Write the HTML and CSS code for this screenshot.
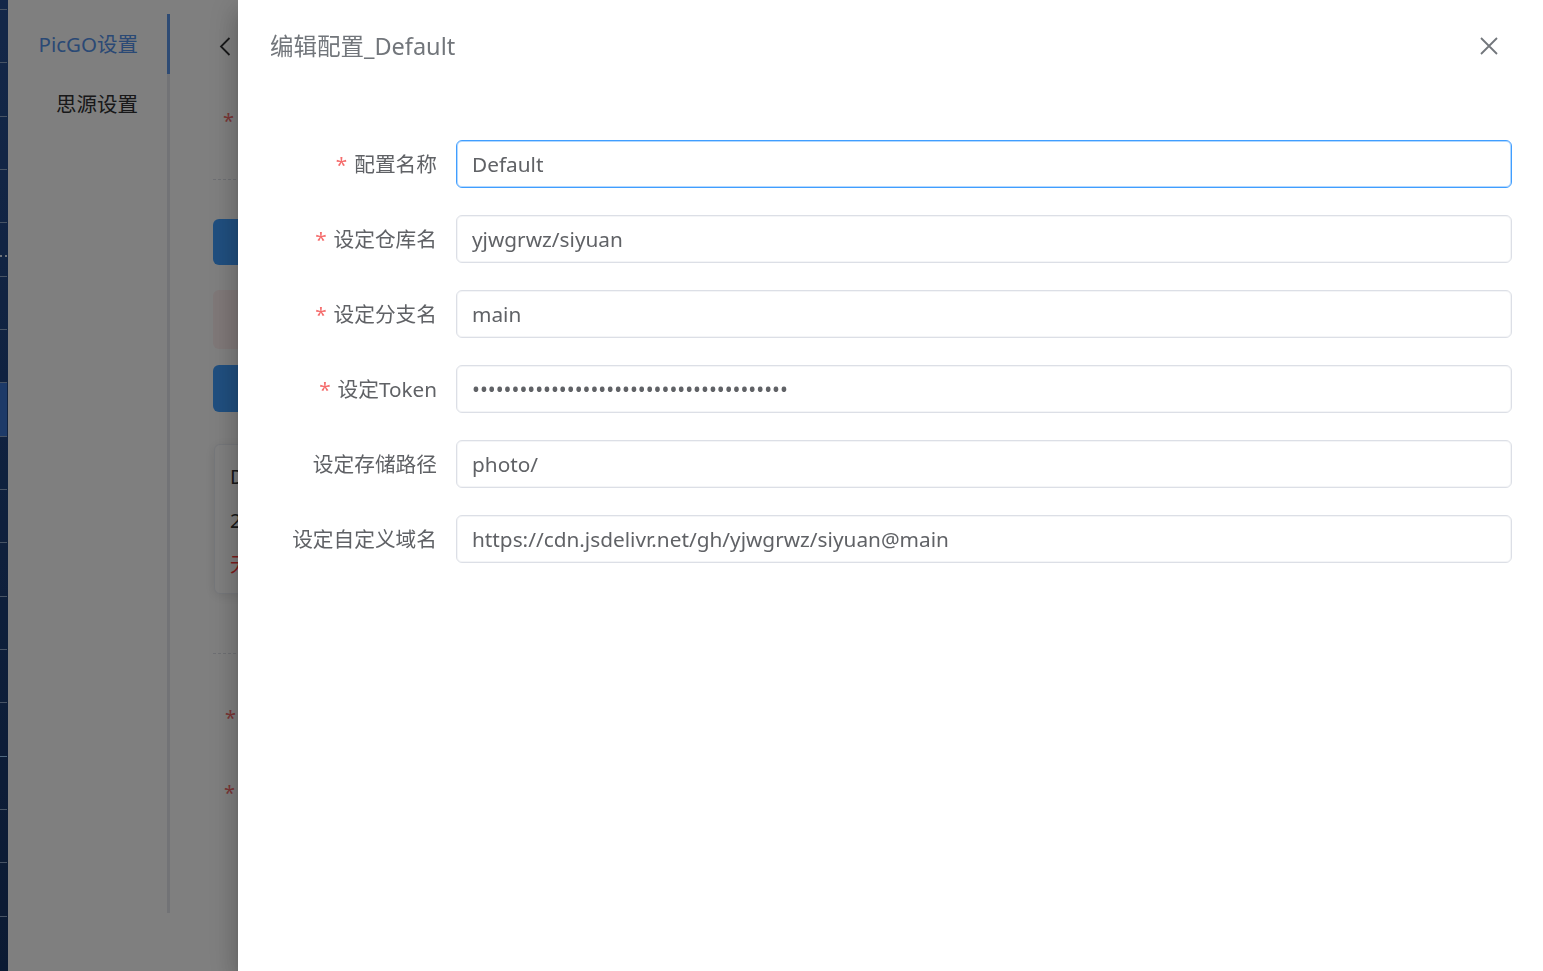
FILE: index.html
```html
<!DOCTYPE html>
<html lang="zh-CN">
<head>
<meta charset="utf-8">
<title>编辑配置</title>
<link rel="stylesheet" href="styles.css">
</head>
<body>
<div class="app">
  <aside class="rail">
    <div class="seg"></div><div class="seg"></div><div class="seg"></div><div class="seg"></div>
    <div class="seg dots"><span></span><span></span></div><div class="seg"></div><div class="seg"></div><div class="seg hl"></div>
    <div class="seg"></div><div class="seg"></div><div class="seg"></div><div class="seg"></div>
    <div class="seg"></div><div class="seg"></div><div class="seg bright"></div><div class="seg"></div>
    <div class="seg"></div><div class="seg"></div>
  </aside>
  <nav class="tabs">
    <div class="tab active">PicGO设置</div>
    <div class="tab">思源设置</div>
    <div class="tabs-fill"></div>
  </nav>
  <main class="page">
    <div class="back">
      <svg width="12" height="19" viewBox="0 0 12 19"><path d="M10.5 1 L2 9.5 L10.5 18" fill="none" stroke="#303133" stroke-width="1.8"/></svg>
    </div>
    <div class="req">*</div>
    <div class="dash first"></div>
    <div class="btn b1"></div>
    <div class="alert"></div>
    <div class="btn b2"></div>
    <div class="card">
      <div class="card-line">Def</div>
      <div class="card-line">20</div>
      <div class="card-line red">无效</div>
    </div>
    <div class="dash second"></div>
    <div class="req r2">*</div>
    <div class="req r3">*</div>
  </main>
</div>
<div class="mask"></div>
<section class="drawer">
  <header class="drawer-header">
    <span class="drawer-title">编辑配置_Default</span>
    <svg class="close" width="18" height="18" viewBox="0 0 18 18"><path d="M1 1 L17 17 M17 1 L1 17" stroke="#72767b" stroke-width="1.8" fill="none"/></svg>
  </header>
  <form class="form">
    <div class="row">
      <label class="label"><span class="star">*</span>配置名称</label>
      <input class="input focus" type="text" value="Default">
    </div>
    <div class="row">
      <label class="label"><span class="star">*</span>设定仓库名</label>
      <input class="input" type="text" value="yjwgrwz/siyuan">
    </div>
    <div class="row">
      <label class="label"><span class="star">*</span>设定分支名</label>
      <input class="input" type="text" value="main">
    </div>
    <div class="row">
      <label class="label"><span class="star">*</span>设定Token</label>
      <input class="input token" type="password" value="ghp_aaaaaaaaaaaaaaaaaaaaaaaaaaaaaaaaaaaa">
    </div>
    <div class="row">
      <label class="label">设定存储路径</label>
      <input class="input" type="text" value="photo/">
    </div>
    <div class="row">
      <label class="label">设定自定义域名</label>
      <input class="input" type="text" value="https://cdn.jsdelivr.net/gh/yjwgrwz/siyuan@main">
    </div>
  </form>
</section>
</body>
</html>
```
FILE: styles.css
```css
html, body {
  margin: 0;
  height: 100%;
  overflow: hidden;
}
body {
  font-family: "Noto Sans", "Noto Sans CJK SC", sans-serif;
  background: #fff;
  color: #303133;
}
.app {
  display: flex;
  height: 971px;
}
.rail {
  width: 8px;
  flex: none;
  padding-top: 9px;
  box-sizing: border-box;
  background: linear-gradient(#274f92, #173566);
  display: flex;
  flex-direction: column;
}
.seg {
  height: 53.33px;
  flex: none;
  box-sizing: border-box;
  border-top: 1px solid #8ea6c8;
  margin-right: 1px;
}
.seg.hl { background: #3a74d0; }
.seg.bright { border-top-color: #9fd0ff; }
.seg.dots { display: flex; gap: 3px; align-items: flex-start; padding-top: 32px; }
.seg.dots span { width: 2px; height: 2px; background: #dfe8f5; }
.tabs {
  width: 162px;
  flex: none;
  padding-top: 14px;
  height: 913px;
  box-sizing: border-box;
  display: flex;
  flex-direction: column;
}
.tab {
  height: 60px;
  box-sizing: border-box;
  border-right: 3px solid #e4e7ed;
  padding-right: 29px;
  text-align: right;
  line-height: 60px;
  font-size: 20.5px;
  color: #303133;
}
.tab.active {
  color: #5592ea;
  border-right-color: #5c97e8;
}
.tabs-fill {
  flex: 1;
  border-right: 3px solid #e4e7ed;
}
.page {
  flex: 1;
  padding-left: 43px;
  display: flex;
  flex-direction: column;
  align-items: flex-start;
}
.back {
  margin: 37px 0 0 6px;
  height: 19px;
}
.back svg { display: block; }
.req {
  color: #f56c6c;
  font-size: 20px;
  line-height: 20px;
  height: 20px;
  margin: 55px 0 0 10px;
}
.req.r2 { margin: 54px 0 0 12px; }
.req.r3 { margin: 55px 0 0 11px; }
.dash {
  width: 600px;
  border-top: 1px dashed #dcdfe6;
}
.dash.first { margin-top: 48px; }
.dash.second { margin-top: 59px; }
.btn {
  width: 300px;
  background: #409eff;
  border-radius: 6px;
}
.b1 { margin-top: 39px; height: 46px; }
.b2 { margin-top: 16px; height: 47px; }
.alert {
  margin-top: 25px;
  width: 300px;
  height: 59px;
  background: #fef0f0;
  border-radius: 6px;
}
.card {
  margin: 32px 0 0 1px;
  width: 400px;
  height: 150px;
  box-sizing: border-box;
  padding: 10px 15px;
  background: #fff;
  border: 1px solid #ebeef5;
  border-radius: 6px;
  box-shadow: 0 2px 12px rgba(0, 0, 0, 0.1);
}
.card-line {
  line-height: 44px;
  font-size: 20px;
  color: #303133;
}
.card-line.red { color: #ff3a3a; }
.mask {
  position: fixed;
  inset: 0;
  background: rgba(0, 0, 0, 0.5);
}
.drawer {
  position: fixed;
  top: 0;
  right: 0;
  bottom: 0;
  width: 1305px;
  background: #fff;
  box-shadow: 0 8px 10px -5px rgba(0,0,0,.2), 0 16px 24px 2px rgba(0,0,0,.14), 0 6px 30px 5px rgba(0,0,0,.12);
}
.drawer-header {
  display: flex;
  align-items: center;
  justify-content: space-between;
  height: 32px;
  padding: 30px 45px 0 32px;
}
.drawer-title {
  font-size: 23.5px;
  color: #72767b;
  line-height: 32px;
}
.close { display: block; }
.form {
  padding: 78px 31px 0 32px;
  display: flex;
  flex-direction: column;
  gap: 27px;
}
.row {
  display: flex;
  align-items: center;
  height: 48px;
}
.label {
  width: 186px;
  flex: none;
  box-sizing: border-box;
  padding-right: 19px;
  text-align: right;
  font-size: 20.7px;
  line-height: 30px;
  color: #606266;
}
.star {
  color: #f56c6c;
  margin-right: 7px;
}
.input {
  flex: 1;
  min-width: 0;
  height: 48px;
  box-sizing: border-box;
  border: 1px solid #dcdfe6;
  border-radius: 6px;
  padding: 0 15px;
  font-family: "Noto Sans", "Noto Sans CJK SC", sans-serif;
  font-size: 20.8px;
  color: #606266;
  background: #fff;
  outline: none;
  box-shadow: inset 0 0 0 1px rgba(220, 223, 230, 0.3);
}
.input.token { font-size: 21px; }
.input.focus {
  border-color: #409eff;
  box-shadow: inset 0 0 0 1px rgba(64, 158, 255, 0.4);
}
```
